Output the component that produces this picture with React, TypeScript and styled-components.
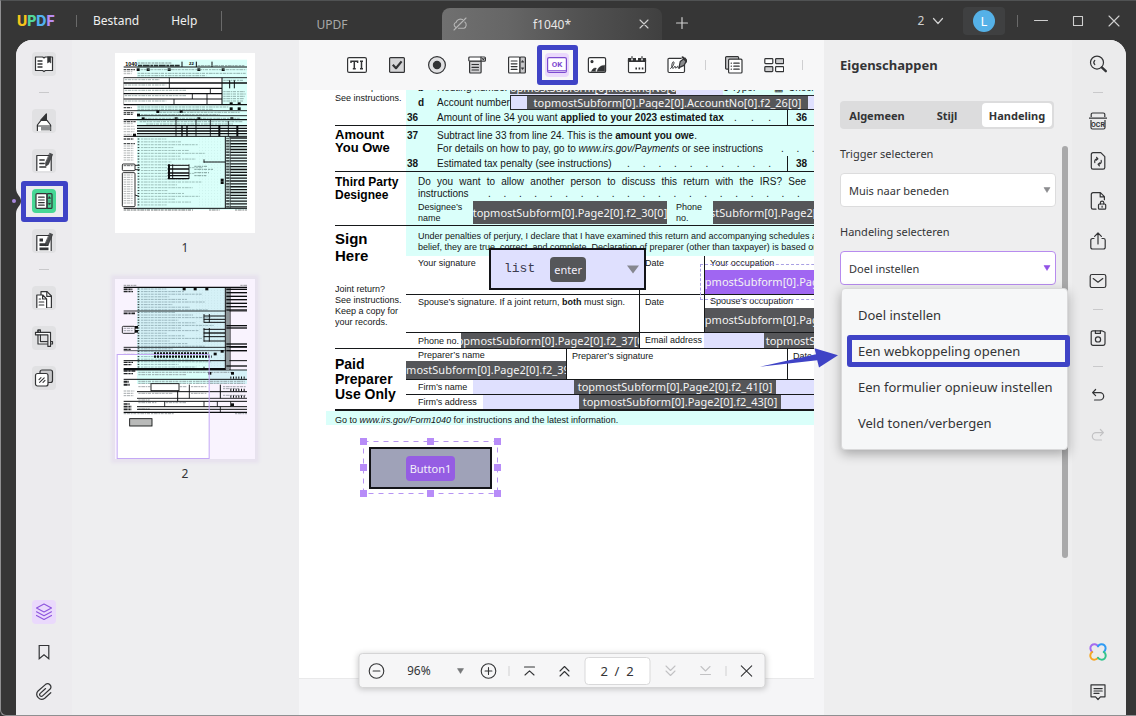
import React from 'react';
import styled, { createGlobalStyle, css } from 'styled-components';

const ui = `"Noto Sans", "Open Sans", sans-serif`;
const print = `"Liberation Sans", Arial, sans-serif`;
const ink = '#333436';
const mint = '#dafffa';
const lavender = '#dfe0fe';
const chipGray = '#555659';
const accent = '#3f43c6';
const purple = '#955de3';

const Global = createGlobalStyle`
  *, *::before, *::after { box-sizing: border-box; }
  html, body { margin: 0; padding: 0; }
  body { font-family: ${ui}; font-size: 12px; color: ${ink}; background: #363636; }
  button, input, select { font: inherit; color: inherit; margin: 0; }
  button { border: 0; padding: 0; background: none; cursor: pointer; }
  svg { display: block; flex: none; }
`;

/* ---------- window ---------- */

const Window = styled.div`
  display: flex;
  flex-direction: column;
  height: 100vh;
  min-height: 600px;
  overflow: hidden;
  background: #363636;
  border: 1px solid #8f8f91;
  border-top-color: #505253;
  border-right: 0;
  border-bottom-left-radius: 6px;
`;

const TitleBar = styled.header`
  display: flex;
  flex: none;
  height: 39px;
  align-items: flex-start;
  color: #e9e9e9;
`;

const Menu = styled.nav`
  display: flex;
  flex: none;
  align-items: center;
  width: 221px;
  height: 39px;
`;

const Logo = styled.div`
  flex: none;
  width: 75px;
  padding-left: 16px;
  font: 800 14px/20px Inter, sans-serif;
`;

const LogoLetter = styled.span<{ $c: string }>`
  color: ${(p) => p.$c};
`;

const BarDivider = styled.span<{ $h?: number }>`
  flex: none;
  width: 1px;
  height: ${(p) => p.$h ?? 12}px;
  background: #6a6a6a;
`;

const MenuButton = styled.button`
  flex: none;
  height: 28px;
  padding: 0 16px;
  font-size: 12px;
  color: #f0f0f0;
`;

const Tab = styled.div<{ $active?: boolean }>`
  position: relative;
  display: flex;
  align-items: center;
  justify-content: space-between;
  width: 220px;
  height: 32px;
  margin-top: 7px;
  padding: 0 10px;
  color: #a9a9a9;
  ${(p) =>
    p.$active
      ? css`
          color: #e8e8e8;
          border-radius: 8px 8px 0 0;
          background: linear-gradient(90deg, #707070 0%, #666 30%, #525252 62%, #404040 100%);
        `
      : css`
          justify-content: center;
        `}
`;

const TabLabel = styled.button`
  flex: 1;
  height: 32px;
`;

const Spacer = styled.div`
  flex: 1;
`;

const WindowTools = styled.div`
  display: flex;
  align-items: center;
  height: 39px;
`;

const BarButton = styled.button<{ $w: number }>`
  display: flex;
  align-items: center;
  justify-content: center;
  gap: 6px;
  width: ${(p) => p.$w}px;
  height: 28px;
  color: #cfcfcf;
`;

const NewTab = styled(BarButton)`
  margin-top: 8px;
`;

const AvatarButton = styled.button`
  display: flex;
  align-items: center;
  justify-content: center;
  width: 42px;
  height: 28px;
  margin-right: 12px;
  border-radius: 4px;
  background: #3f4041;
`;

const Avatar = styled.span`
  width: 22px;
  height: 22px;
  border-radius: 50%;
  background: #55b1e7;
  color: #fff;
  font-size: 13px;
  line-height: 22px;
`;

const Body = styled.div`
  display: flex;
  flex: 1;
  min-height: 0;
  margin: 0 10px 0 15px;
  border-radius: 16px 16px 0 0;
  background: #eeeef0;
`;

/* ---------- rails ---------- */

const Rail = styled.aside<{ $w: number; $right?: boolean }>`
  position: relative;
  display: flex;
  flex: none;
  flex-direction: column;
  align-items: center;
  gap: 16px;
  width: ${(p) => p.$w}px;
  padding: 12px ${(p) => (p.$right ? 2 : 0)}px 11px 0;
  border-radius: ${(p) => (p.$right ? '0 16px 0 0' : '16px 0 0 0')};
  background: ${(p) => (p.$right ? '#ebebec' : '#ecebee')};
`;

const tileTone = {
  none: 'transparent',
  gray: '#e1e1e3',
  green: '#47d795',
  lilac: '#ead9fc',
};

const Tile = styled.button<{ $tone?: keyof typeof tileTone; $dim?: boolean }>`
  position: relative;
  display: flex;
  flex: none;
  align-items: center;
  justify-content: center;
  width: 24px;
  height: 24px;
  border-radius: 4px;
  color: ${(p) => (p.$dim ? '#c2c2c4' : ink)};
  background: ${(p) => tileTone[p.$tone ?? 'none']};
`;

const RailRule = styled.hr`
  flex: none;
  width: 10px;
  height: 1px;
  margin: 0;
  border: 0;
  background: #c9c9cb;
`;

const Highlight = styled.span<{ $inset: string }>`
  position: absolute;
  inset: ${(p) => p.$inset};
  border: 5px solid ${accent};
  border-radius: 3px;
  pointer-events: none;
`;

const Notch = styled.svg`
  position: absolute;
  left: -5px;
  top: 145px;
`;

/* ---------- thumbnails ---------- */

const Thumbs = styled.section`
  flex: none;
  width: 227px;
  padding: 13px 0 0 43px;
  overflow: hidden;
`;

const Thumb = styled.figure<{ $selected?: boolean }>`
  width: 140px;
  margin: 0 0 23px;
  text-align: center;
  line-height: 16px;

  & > svg {
    margin-bottom: 7px;
    background: ${(p) => (p.$selected ? '#f9f3fe' : '#fff')};
    box-shadow: ${(p) => (p.$selected ? '0 0 3px 4px #e7e2ee' : 'none')};
  }
`;

/* ---------- centre column ---------- */

const Center = styled.main`
  position: relative;
  display: flex;
  flex: 1;
  flex-direction: column;
  min-width: 0;
  background: #f5f5f7;
`;

const Toolbar = styled.div`
  display: flex;
  flex: none;
  align-items: center;
  gap: 16px;
  height: 50px;
  padding-left: 46px;
  background: #f7f7f8;
`;

const ToolRule = styled.span`
  flex: none;
  width: 1px;
  height: 10px;
  background: #cfcfd1;
`;

const Viewport = styled.div`
  position: relative;
  flex: 1;
  min-height: 0;
  margin-right: 10px;
  overflow: hidden;
`;

const Page = styled.article`
  position: relative;
  width: 765px;
  height: 589px;
  padding: 0 36px;
  background: #fff;
  color: #131516;
  font: 10px/12px ${print};
  border-bottom: 1px solid #e9e9ea;
`;

const Section = styled.section<{ $h: number; $line?: number }>`
  display: grid;
  grid-template-columns: 71px 1fr;
  height: ${(p) => p.$h}px;
  border-bottom: ${(p) => p.$line ?? 1}px solid #16181a;
`;

const Side = styled.div<{ $end?: boolean }>`
  display: flex;
  flex-direction: column;
  justify-content: ${(p) => (p.$end ? 'flex-end' : 'flex-start')};
  min-height: 0;
  overflow: hidden;
  padding-bottom: ${(p) => (p.$end ? 21 : 0)}px;
  white-space: nowrap;
`;

const Heading = styled.h3<{ $s: number; $lh: number; $top: number }>`
  margin: ${(p) => p.$top}px 0 0;
  font-size: ${(p) => p.$s}px;
  line-height: ${(p) => p.$lh}px;
  font-weight: bold;
  color: #000;
`;

const Note = styled.p<{ $top?: number }>`
  margin: ${(p) => p.$top ?? 0}px 0 0;
  font-size: 9px;
  line-height: 11px;
`;

const Rows = styled.div<{ $mint?: boolean; $end?: boolean; $top?: number; $bottom?: number }>`
  display: flex;
  flex-direction: column;
  justify-content: ${(p) => (p.$end ? 'flex-end' : 'flex-start')};
  min-height: 0;
  overflow: hidden;
  padding-top: ${(p) => p.$top ?? 0}px;
  padding-bottom: ${(p) => p.$bottom ?? 0}px;
  background: ${(p) => (p.$mint ? mint : 'transparent')};
`;

const Row = styled.div<{ $h: number; $line?: boolean; $pad?: number; $small?: boolean }>`
  display: flex;
  flex: none;
  align-items: center;
  height: ${(p) => p.$h}px;
  padding-left: ${(p) => p.$pad ?? 0}px;
  border-bottom: ${(p) => (p.$line ? '1px solid #16181a' : '0')};
  font-size: ${(p) => (p.$small ? 9 : 10)}px;
  white-space: nowrap;
`;

const No = styled.b<{ $w?: number; $pad?: number }>`
  flex: none;
  width: ${(p) => p.$w ?? 31}px;
  padding-left: ${(p) => p.$pad ?? 1}px;
`;

const Amount = styled.b`
  align-self: stretch;
  display: flex;
  flex: none;
  align-items: center;
  width: 90px;
  padding-left: 8px;
  border-left: 1px solid #16181a;
`;

const Lead = styled.span<{ $w: number }>`
  flex: none;
  width: ${(p) => p.$w}px;
`;

const DotRow = styled.span<{ $w: number }>`
  display: flex;
  flex: none;
  justify-content: space-between;
  width: ${(p) => p.$w}px;
  padding-right: 16px;
`;

const Justified = styled.span`
  width: 388px;
  text-align-last: justify;
`;

const Cell = styled.div<{ $w?: number; $ruled?: boolean }>`
  display: flex;
  flex-direction: column;
  flex: ${(p) => (p.$w ? 'none' : '1')};
  align-self: stretch;
  width: ${(p) => (p.$w ? p.$w + 'px' : 'auto')};
  border-left: ${(p) => (p.$ruled ? '1px solid #16181a' : '0')};
`;

const CellText = styled.span<{ $h?: number; $pad?: number }>`
  flex: none;
  padding-left: ${(p) => p.$pad ?? 5}px;
  line-height: ${(p) => p.$h ?? 14}px;
`;

const Chip = styled.span<{ $w?: number; $h: number; $c?: string }>`
  display: flex;
  flex: none;
  align-items: center;
  justify-content: center;
  width: ${(p) => (p.$w ? p.$w + 'px' : 'auto')};
  height: ${(p) => p.$h}px;
  overflow: hidden;
  background: ${(p) => p.$c ?? chipGray};
  color: #f4f4f4;
  font: 11px/14px ${ui};
  white-space: nowrap;
`;

const Field = styled.span<{ $pad?: number; $w?: number; $box?: boolean }>`
  display: flex;
  align-self: stretch;
  align-items: center;
  flex: ${(p) => (p.$w ? 'none' : '1')};
  width: ${(p) => (p.$w ? p.$w + 'px' : 'auto')};
  padding-left: ${(p) => p.$pad ?? 0}px;
  overflow: hidden;
  background: ${lavender};
  border: ${(p) => (p.$box ? '1px solid #26282c' : '0')};
`;

const FootNote = styled.footer`
  height: 14px;
  margin: 0 -36px 0 -9px;
  padding: 3px 0 0 9px;
  background: ${mint};
  font-size: 9px;
  line-height: 12px;
`;

/* Widgets dropped on the page at free positions */
const ListField = styled.div`
  position: absolute;
  left: 190px;
  top: 158px;
  display: flex;
  align-items: center;
  width: 157px;
  height: 42px;
  padding: 0 4px 0 13px;
  border: 2px solid #131418;
  background: ${lavender};
  color: #3c3c50;
  font: 13px/20px "Liberation Mono", monospace;
`;

const NameTag = styled.span<{ $c: string; $left: number }>`
  margin-left: ${(p) => p.$left}px;
  padding: 0 4px;
  border-radius: 4px;
  background: ${(p) => p.$c};
  color: #f3effa;
  font: 11px/25px ${ui};
`;

const OccupationOutline = styled.div`
  position: absolute;
  left: 401px;
  top: 174px;
  width: 180px;
  height: 36px;
  border: 1px dashed #a9a0e4;
`;

const Selection = styled.div`
  position: absolute;
  left: 65px;
  top: 352px;
  width: 134px;
  height: 53px;
  padding: 5px;
`;

const Marquee = styled.svg`
  position: absolute;
  left: -5px;
  top: -5px;
`;

const PdfButton = styled.button`
  display: flex;
  align-items: center;
  justify-content: center;
  width: 123px;
  height: 42px;
  border: 2px solid #131418;
  background: #9fa2b8;
`;

const Pager = styled.div`
  position: absolute;
  left: 50%;
  bottom: 27px;
  transform: translateX(-50%);
  display: flex;
  align-items: center;
  gap: 8px;
  height: 35px;
  padding: 0 6px 0 5px;
  border: 1px solid #d5d5d6;
  border-radius: 4px;
  background: #f6f6f7;
  box-shadow: 0 1px 6px rgba(0, 0, 0, 0.22);
`;

const PagerGroup = styled.div`
  display: flex;
  gap: 11px;
`;

const PagerRule = styled(ToolRule)``;

const ZoomBox = styled.div`
  position: relative;
  width: 72px;
`;

const ZoomSelect = styled.select`
  appearance: none;
  width: 72px;
  height: 24px;
  padding: 0 0 0 11px;
  border: 0;
  background: none;
`;

const PageInput = styled.input`
  width: 66px;
  height: 28px;
  border: 1px solid #d9d9da;
  border-radius: 4px;
  background: #fff;
  text-align: center;
  font-size: 13px;
  white-space: pre;
`;

/* ---------- properties ---------- */

const Panel = styled.section`
  flex: none;
  width: 248px;
  padding: 0 4px 0 16px;
  background: #eeeeef;
`;

const PanelTitle = styled.h2`
  margin: 16px 0 27px;
  font-size: 13px;
  line-height: 18px;
  font-weight: bold;
`;

const Segments = styled.div`
  display: flex;
  width: 214px;
  height: 28px;
  padding: 2px;
  border-radius: 4px;
  background: #dcdcdd;
`;

const Segment = styled.button<{ $w: number; $on?: boolean }>`
  width: ${(p) => p.$w}px;
  border-radius: 4px;
  font-size: 11px;
  font-weight: bold;
  background: ${(p) => (p.$on ? '#fff' : 'transparent')};
`;

const PanelScroll = styled.div`
  display: flex;
  gap: 6px;
  margin-top: 17px;
`;

const Fields = styled.div`
  flex: 1;
`;

const ScrollThumb = styled.div`
  width: 6px;
  height: 412px;
  border-radius: 3px;
  background: #a9a9aa;
`;

const FieldLabel = styled.label`
  display: block;
  height: 27px;
  font-size: 11px;
  line-height: 16px;
`;

const SelectBox = styled.div`
  position: relative;
  height: 34px;
  margin-bottom: 17px;
`;

const Select = styled.select<{ $open?: boolean }>`
  appearance: none;
  width: 100%;
  height: 34px;
  padding: 0 24px 0 8px;
  border: 1px solid ${(p) => (p.$open ? '#b78bee' : '#dcdcdd')};
  border-radius: 4px;
  background: #fff;
  font-size: 11px;
`;

const Caret = styled.svg<{ $right: number; $top: number }>`
  position: absolute;
  right: ${(p) => p.$right}px;
  top: ${(p) => p.$top}px;
  pointer-events: none;
`;

const Options = styled.ul`
  position: absolute;
  z-index: 2;
  left: 1px;
  top: 37px;
  width: 227px;
  height: 162px;
  margin: 0;
  padding: 8px 0;
  list-style: none;
  border: 1px solid #d9d9da;
  border-radius: 4px;
  background: #f6f7f8;
  box-shadow: 0 4px 12px rgba(0, 0, 0, 0.3);
`;

const Option = styled.li`
  position: relative;
`;

const OptionButton = styled.button`
  width: 100%;
  height: 36px;
  padding-left: 16px;
  text-align: left;
  font-size: 13px;
  white-space: nowrap;
`;

const Pointer = styled.svg`
  position: absolute;
  z-index: 3;
  left: -81px;
  top: 96px;
  pointer-events: none;
`;

/* ---------- icons ---------- */

const Icon = ({ children, s = 20, w = 1.2 }: { children: React.ReactNode; s?: number; w?: number }) => (
  <svg width={s} height={s} viewBox={`0 0 ${s} ${s}`} fill="none" stroke="currentColor" strokeWidth={w} strokeLinejoin="round" strokeLinecap="round" aria-hidden="true">
    {children}
  </svg>
);

const BookIcon = () => (
  <Icon>
    <path d="M1.5 3h7.2l1.3 1 1.3-1h7.2v13.5h-7.2L10 17.6l-1.3-1.1H1.5z" fill="#fff" />
    <path d="M4 7h4M4 10h4M4 13h4" strokeWidth="1.4" />
    <path d="M13.6 3v6l1.6-1.2L16.8 9V3z" fill="currentColor" strokeWidth=".6" />
  </Icon>
);
const MarkerIcon = () => (
  <Icon>
    <path d="M7 9L12.4 3v6z" fill="currentColor" />
    <path d="M7 9.400h6l3.600 4.600v6H3.400v-6z" fill="#fff" stroke="none" />
    <path d="M7 9.400h6l3.600 4.600v6M3.400 20v-6L7 9.400" />
    <path d="M3.400 15h13.200" />
    <path d="M7 17.500h9.600" stroke="#8b8d8f" strokeWidth="4" strokeLinecap="butt" />
  </Icon>
);
const NotePenIcon = ({ blocks }: { blocks?: boolean }) => (
  <Icon>
    <path d="M3 20V4.500h14V20z" fill="#fff" stroke="none" />
    <path d="M2.800 19.600V4.500h14.400v15.100" />
    {blocks ? (
      <path d="M5.500 9h3.500M5.500 13.600h9M5.500 17.800h9" strokeWidth="2.8" strokeLinecap="butt" />
    ) : (
      <path d="M5.800 9h4.400M5.800 12.500h4.400M5.800 16h6" strokeWidth="1.4" />
    )}
    <path d="M16 2.400l2.600 1-4.200 10-2.600 1.600-.2-3z" fill="#4a4c4e" strokeWidth=".7" />
  </Icon>
);
const FormIcon = () => (
  <Icon>
    <rect x="2" y="2.6" width="11" height="14.8" rx="1" fill="#fff" />
    <rect x="13" y="2.6" width="5" height="14.8" rx="1" fill="none" />
    <path d="M4.6 6.2h5.6M4.6 9h5.6M4.6 11.6h5.6M4.6 14.2h5.6" />
    <path d="M15.5 5.6l1.2 1.8h-2.4zM15.5 13.8l1.2-1.8h-2.4zM14.6 10h1.8" fill="currentColor" strokeWidth=".5" />
  </Icon>
);
const PagesIcon = () => (
  <Icon>
    <path d="M7 15V3.600h6L17.400 8v12H13" fill="#fff" />
    <path d="M12.800 3.600v4.800h4.600" />
    <path d="M2.800 20V7h6l3.800 3.800V20z" fill="#fff" stroke="none" />
    <path d="M2.800 19.600V7h6l3.800 3.800v8.800M8.600 7v4h4M5.200 11h1.400M5.200 14h4.600M5.200 17h4.600" />
  </Icon>
);
const CropIcon = () => (
  <Icon>
    <path d="M4 2h2.400v11.600H18.500V16H4z" fill="#fff" />
    <path d="M1.500 4.400h15v14h-2.600V6.800H1.500z" fill="#fff" />
    <path d="M4 4.400V2h2.400v2.400" />
  </Icon>
);
const WatermarkIcon = () => (
  <Icon>
    <rect x="6" y="2" width="12.500" height="12.500" rx="2" fill="#c8c8ca" />
    <rect x="1.500" y="5.500" width="12.500" height="12.500" rx="2" fill="#fff" />
    <path d="M5 11.600l2-2M5.600 14.400l4.600-4.600M9 14.400l2-2" strokeWidth="1.100" />
  </Icon>
);
const LayersIcon = () => (
  <Icon w={1.1}>
    <g stroke="#8d55dd">
      <path d="M10 2l7.500 4L10 10 2.500 6z" />
      <path d="M2.500 9.800L10 13.800l7.500-4M2.500 13.400L10 17.400l7.500-4" />
    </g>
  </Icon>
);
const BookmarkIcon = () => (
  <Icon>
    <path d="M5.200 3.500h9.600v13.200L10 12.800l-4.800 3.900z" strokeLinejoin="miter" />
  </Icon>
);
const ClipIcon = () => (
  <Icon>
    <path d="M11.200 6.400l-4.800 5.400a1.700 1.700 0 002.600 2.200l6.800-7.600a3.300 3.300 0 00-5-4.200L4 9.600a5 5 0 007.400 6.600l5.400-6.200" transform="rotate(6 10 10)" />
  </Icon>
);
const SearchIcon = () => (
  <Icon>
    <circle cx="9" cy="8.600" r="6.500" />
    <path d="M6.800 6.400a3 3 0 000 4.200" />
    <path d="M13.800 13.400l4 3.800" strokeWidth="2.400" />
  </Icon>
);
const OcrIcon = () => (
  <svg width="20" height="20" viewBox="0 0 20 20" fill="none" stroke="currentColor" strokeWidth="1.200" aria-hidden="true">
    <path d="M3.200 6V3.500a1.500 1.500 0 011.500-1.500h10.600a1.500 1.500 0 011.500 1.500V6M1 7.200h18M3 9v7.500A1.500 1.500 0 004.500 18h11a1.500 1.500 0 001.500-1.500V9" />
    <text x="10" y="15.800" textAnchor="middle" fontFamily="Roboto, sans-serif" fontWeight="700" fontSize="7" fill="currentColor" stroke="none">OCR</text>
  </svg>
);
const ConvertIcon = () => (
  <Icon>
    <path d="M5 1.700h7.800l4 4V16.500a1.700 1.700 0 01-1.700 1.700H5a1.700 1.700 0 01-1.700-1.700v-13A1.700 1.700 0 015 1.700z" />
    <path d="M6.800 11.600c-.6-2 .8-3.800 2.800-3.800M8.600 6.300l1.300 1.500-1.500 1.300M13.200 9.400c.6 2-.8 3.900-2.800 3.900M11.400 14.800l-1.300-1.500 1.500-1.300" />
  </Icon>
);
const LockIcon = () => (
  <Icon>
    <path d="M8 18.200H5a1.700 1.700 0 01-1.700-1.700v-13A1.700 1.700 0 015 1.700h7.400l4 4v3M12.200 1.900v4h4" />
    <rect x="10.500" y="13" width="7.200" height="5.200" rx="1" />
    <path d="M12.400 13v-1.200a1.700 1.700 0 013.400 0V13M14.100 15.200v1" />
  </Icon>
);
const ShareIcon = () => (
  <Icon>
    <path d="M6 7.500H4.500A1.700 1.700 0 002.800 9.200v7A1.700 1.700 0 004.500 18h11a1.700 1.700 0 001.700-1.800v-7a1.700 1.700 0 00-1.700-1.700H14M10 13V2.200M6.600 5.400L10 2l3.400 3.400" />
  </Icon>
);
const MailIcon = () => (
  <Icon>
    <rect x="2.200" y="3.500" width="15.600" height="13" rx="1.800" />
    <path d="M5.200 7.600l4.800 3.600 4.800-3.600" />
  </Icon>
);
const SaveIcon = () => (
  <Icon>
    <path d="M5 2.800h8.800L17 4.200v11.400a1.700 1.700 0 01-1.700 1.700H4.900a1.700 1.700 0 01-1.700-1.700V4.500A1.700 1.700 0 015 2.800z" />
    <path d="M7.400 2.800v2.600h5V2.800" />
    <circle cx="10" cy="11.400" r="2.600" />
  </Icon>
);
const UndoIcon = ({ flip }: { flip?: boolean }) => (
  <Icon>
    <g transform={flip ? 'matrix(-1 0 0 1 20 0)' : undefined}>
      <path d="M7.600 4.500L4.600 7.600l3 3M4.800 7.600H12a3.600 3.600 0 010 7.400H6.500" />
    </g>
  </Icon>
);
const FlowerIcon = () => (
  <svg width="20" height="20" viewBox="0 0 20 20" fill="none" strokeWidth="2" strokeLinecap="round" aria-hidden="true">
    <path d="M10 4.200C8.600 2 5.600 1.400 3.600 3.200S2.200 8.400 4.200 10" stroke="#a46bf0" />
    <path d="M10 4.200C11.400 2 14.400 1.400 16.400 3.200S17.800 8.400 15.800 10" stroke="#2f9bf4" />
    <path d="M4.200 10C2 11.400 1.600 14.800 3.400 16.600S8.600 17.800 10 15.800" stroke="#f5a623" />
    <path d="M15.800 10C18 11.400 18.400 14.800 16.600 16.600S11.400 17.800 10 15.800" stroke="#32c48d" />
  </svg>
);
const CommentIcon = () => (
  <Icon>
    <path d="M3 2.800h14v12h-4.600L10 17.500l-2.400-2.700H3z" />
    <path d="M6 6.600h8.200M6 9h8.200M6 11.400h5" />
  </Icon>
);

const TextFieldIcon = () => (
  <svg width="20" height="20" viewBox="0 0 20 20" aria-hidden="true">
    <rect x=".6" y="2.600" width="18.800" height="14.800" rx="1.500" fill="#fff" stroke="currentColor" strokeWidth="1.200" />
    <path d="M4 8V6.200h6.600V8M7.300 6v8M5.800 13.800h3M13 6.200h3M13 13.800h3M14.500 6v8" fill="none" stroke="currentColor" strokeWidth="1.500" />
  </svg>
);
const CheckFieldIcon = () => (
  <Icon>
    <rect x="2.600" y="2.600" width="14.800" height="14.800" rx="1" fill="#d6d6d8" />
    <path d="M5.800 9.800l3.200 3.400 5.600-6.800" strokeWidth="2.200" strokeLinecap="butt" />
  </Icon>
);
const RadioFieldIcon = () => (
  <Icon>
    <circle cx="10" cy="10" r="8.400" fill="#e0e0e2" />
    <circle cx="10" cy="10" r="3.600" fill="currentColor" />
  </Icon>
);
const ComboIcon = () => (
  <Icon>
    <rect x="2.600" y="6" width="11.500" height="12" rx="1" fill="#d0d0d2" />
    <rect x="1.800" y="2" width="16.600" height="4.200" rx="1" fill="#fff" />
    <path d="M14 2v4M15.400 3.600l.9 1 .9-1M5 9.500h6.500M5 12.300h6.500M5 15h6.500" />
  </Icon>
);
const ListIcon = () => (
  <Icon>
    <rect x="1.600" y="2" width="11.400" height="16" rx="1" fill="#fff" />
    <rect x="13" y="2" width="5.400" height="16" rx="1" fill="#c9c9cb" />
    <path d="M4.200 6h5.800M4.200 8.800h5.800M4.200 11.600h5.800M4.200 14.400h5.800" />
    <path d="M15.700 5.600l1.200 1.600h-2.400zM15.700 14.400l1.200-1.600h-2.400z" fill="currentColor" strokeWidth=".5" />
  </Icon>
);
const OkIcon = () => (
  <svg width="20" height="20" viewBox="0 0 20 20" aria-hidden="true">
    <rect x=".6" y="2.600" width="18.800" height="14.800" rx="1.500" fill="#fff" stroke="#7d4bd0" strokeWidth="1.200" />
    <path d="M.8 15.600h18.400" stroke="#9a70de" strokeWidth="1.400" />
    <text x="10" y="12.200" textAnchor="middle" fontFamily="Roboto, sans-serif" fontWeight="700" fontSize="8" fill="#7d4bd0">OK</text>
  </svg>
);
const ImageIcon = () => (
  <Icon>
    <rect x="1.400" y="2.600" width="17.200" height="14.800" rx="1.500" fill="#fff" />
    <circle cx="5" cy="6.600" r="1" fill="currentColor" />
    <path d="M4.400 16.600c1-3 3-4 5-3.400-.6 1-1 2.200-1 3.400zM10 16.600c.8-4 3.600-6.200 7.800-6.400v6.400z" fill="currentColor" strokeWidth=".4" />
  </Icon>
);
const DateIcon = () => (
  <Icon>
    <path d="M1.500 5h17v11.400a1.200 1.200 0 01-1.200 1.200H2.700a1.200 1.200 0 01-1.200-1.200z" fill="#fff" />
    <path d="M1.500 3.600h17v2.800h-17z" fill="currentColor" />
    <path d="M5 1.600v2.800M10 1.600v2.800M15 1.600v2.800" stroke="#fff" strokeWidth="2" />
    <path d="M5 1.600v2.400M15 1.600v2.400" />
    <path d="M8.400 13.600h1.600M11.600 13.600h1.600M14.800 13.600h1.600" strokeWidth="2" strokeLinecap="butt" />
  </Icon>
);
const SignIcon = () => (
  <Icon>
    <path d="M16.500 9.500v6.800a1.200 1.200 0 01-1.200 1.200H1.200a1.200 1.200 0 01-1.200-1.200V4.500a1.200 1.200 0 011.200-1.200h12" transform="translate(1 0)" fill="#fff" />
    <path d="M3.600 13.400c2.600-1.600 4.200-6 3-6.600-1.600-.4-2.600 6-.8 6.600 1 .2 1.400-2.200 2.200-2.200s0 2 .8 2 1-1.800 1.800-1.800 0 1.800.8 1.800h1.200" strokeWidth="1" />
    <path d="M12 12.600l1.200-6 4.800-3.600 1.800 2.400-2.800 5z" fill="#8a8b8d" />
    <path d="M15.600 2.200l3.800 4.200" strokeWidth="2" />
  </Icon>
);
const DuplicateIcon = () => (
  <Icon>
    <rect x="1.600" y="1.600" width="13" height="12.600" rx="1" fill="#c9c9cb" />
    <rect x="4.600" y="4.200" width="13.400" height="13.800" rx="1" fill="#fff" />
    <path d="M7.200 8.200h.2M9.800 8.200h5.400M7.200 11.200h.2M9.800 11.200h5.400M7.200 14.200h.2M9.800 14.200h5.400" />
  </Icon>
);
const GridIcon = () => (
  <Icon>
    <rect x=".8" y="3.600" width="8" height="5" rx=".8" fill="#fff" />
    <rect x="11.600" y="3.600" width="8" height="5" rx=".8" fill="#cfcfd1" />
    <rect x=".8" y="11.600" width="8" height="5" rx=".8" fill="#cfcfd1" />
    <rect x="11.600" y="11.600" width="8" height="5" rx=".8" fill="#fff" />
  </Icon>
);
const CircleIcon = ({ plus }: { plus?: boolean }) => (
  <Icon w={1.1}>
    <circle cx="10" cy="10" r="7.300" />
    <path d={plus ? 'M6.600 10h6.800M10 6.600v6.800' : 'M6.600 10h6.800'} />
  </Icon>
);
const JumpIcon = ({ d }: { d: string }) => (
  <Icon w={1.1}>
    <path d={d} />
  </Icon>
);
const Triangle = ({ c, right, top }: { c: string; right: number; top: number }) => (
  <Caret $right={right} $top={top} width="8" height="6" viewBox="0 0 8 6">
    <path d="M1 .6h6L4 5.400z" fill={c} stroke={c} strokeWidth=".6" strokeLinejoin="round" />
  </Caret>
);

/* ---------- thumbnail drawings ---------- */

const range = (from: number, to: number, step: number) => {
  const out: number[] = [];
  for (let v = from; v <= to; v += step) out.push(v);
  return out;
};

type Seg = [number, number, number, number?];
const H = ({ rows, w = 2.6, c = '#0c0e10', dash }: { rows: Seg[]; w?: number; c?: string; dash?: string }) => (
  <g stroke={c} strokeDasharray={dash}>
    {rows.map(([y, a, b, t], i) => (
      <path key={i} d={`M${a} ${y}H${b}`} strokeWidth={t ?? w} />
    ))}
  </g>
);
const V = ({ cols, w = 2.6, c = '#0c0e10' }: { cols: Seg[]; w?: number; c?: string }) => (
  <g stroke={c}>
    {cols.map(([x, a, b, t], i) => (
      <path key={i} d={`M${x} ${a}V${b}`} strokeWidth={t ?? w} />
    ))}
  </g>
);
const Squares = ({ at }: { at: [number, number][] }) => (
  <g fill="#0b0c0d">
    {at.map(([x, y], i) => (
      <rect key={i} x={x} y={y} width="9" height="8" />
    ))}
  </g>
);
const words = '7 2 11 2 5 2 9 3';

const PageOneDrawing = () => (
  <svg width="140" height="180" viewBox="347 158 418 540" aria-hidden="true">
    <rect x="412" y="178" width="330" height="450" fill={mint} />
    <rect x="372" y="233" width="295" height="79" fill="#fff" />
    <rect x="412" y="377" width="330" height="31" fill="#eafffc" />
    <rect x="692" y="408" width="50" height="216" fill="#e3f7f5" />
    <text x="377" y="196" fontFamily="Liberation Sans, sans-serif" fontWeight="700" fontSize="16">1040</text>
    <H rows={[[188, 415, 515, 3]]} c="#7f9693" dash={words} />
    <H rows={[[196, 415, 540, 5]]} c="#26302f" dash="13 2 20 2 9 2" />
    <V cols={[[547, 184, 200, 3], [590, 184, 200, 3], [637, 184, 200, 3]]} />
    <text x="568" y="195" fontFamily="Liberation Sans, sans-serif" fontWeight="700" fontSize="13">22</text>
    <H rows={[[196, 594, 734]]} c="#7f9693" dash={words} />
    <Squares at={[[411, 204], [441, 204], [504, 204], [593, 204], [666, 204], [690, 306], [714, 306], [690, 321], [714, 321], [470, 330], [540, 330], [412, 340], [426, 351], [525, 351], [593, 351], [692, 351], [400, 400], [663, 535], [663, 543]]} />
    <H rows={[[208, 372, 406, 4], [322, 372, 396, 4], [337, 372, 402, 4], [342, 372, 400, 4], [364, 372, 408, 4], [416, 372, 402, 4], [430, 372, 406, 4], [496, 372, 402]]} c="#4c4f50" dash={words} />
    <H rows={[[214, 372, 398], [220, 372, 396], [370, 372, 400], [378, 372, 404], [386, 372, 406], [394, 372, 404], [402, 372, 396], ...range(437, 485, 7).map((y): Seg => [y, 372, 402]), ...range(524, 612, 7).map((y): Seg => [y, 372, 400])]} c="#8d9192" dash={words} w={2} />
    <H rows={[[208, 423, 740], [219, 414, 738], [226, 414, 620], [238, 375, 480], [254, 375, 500], [270, 375, 560], [286, 375, 560], [302, 375, 500], [240, 671, 730], [274, 671, 736], [281, 671, 738], [288, 671, 736], [295, 671, 732], [302, 671, 730], [320, 414, 686], [327, 414, 640], [336, 480, 720], [343, 424, 660], [354, 436, 720], [364, 420, 730], [371, 440, 700]]} c="#6f8b88" dash={words} w={2} />
    <H rows={[[200, 372, 742, 3], [232, 372, 742], [248, 372, 742, 4], [264, 372, 667, 4], [280, 372, 667, 4], [296, 372, 667, 3], [313, 372, 742, 4], [331, 372, 742], [346, 412, 742], [358, 372, 742, 4], ...range(376, 402, 8).map((y): Seg => [y, 412, 742, 4]), [408, 372, 742, 3], [624, 372, 742, 3], [485, 612, 676, 3]]} />
    <V cols={[[509, 232, 264], [667, 232, 312, 3], [632, 264, 280], [578, 280, 296], [622, 280, 312], [523, 296, 312], [690, 240, 264, 3], [704, 240, 264, 3], [529, 358, 408], [547, 376, 408, 4], [562, 376, 408, 4], [589, 358, 408], [632, 358, 408], [659, 376, 408, 6], [686, 362, 408], [713, 376, 408, 6], [613, 477, 487], [677, 408, 624, 3], [691, 408, 624, 3], [372, 232, 312, 1]]} />
    <H rows={range(416, 616, 8.6).map((y, i): Seg => [y, 424, 500 + ((i * 47) % 120)])} c="#7d9e9a" dash={words} w={2} />
    <H rows={range(416, 616, 8.6).map((y): Seg => [y, 414, 419])} c="#26302f" w={3} />
    <H rows={range(416, 616, 8.6).map((y): Seg => [y, 600, 672])} c="#9fc4bf" dash="1 8" w={2} />
    <H rows={range(413, 622, 8.6).map((y): Seg => [y, 692, 742, 4])} c="#131616" />
    <V cols={[[684, 412, 622, 9]]} c="#47504f" />
    <H rows={range(417, 620, 8.6).map((y): Seg => [y, 679, 690, 3])} c="#e5fffb" />
    <rect x="504" y="492" width="64" height="44" fill="#eafffc" />
    <H rows={[[495, 504, 568, 3], [506, 504, 568, 4], [518, 504, 568, 4], [526, 504, 568, 4], [535, 504, 568, 4]]} />
    <V cols={[[508, 492, 536, 6], [519, 492, 536], [568, 492, 536]]} />
    <H rows={[[498, 584, 624], [507, 584, 640], [517, 584, 628], [526, 584, 620]]} c="#52706c" dash={words} w={2} />
    <g fill="none" stroke="#0b0c0d" strokeWidth="2.600">
      <rect x="368" y="491" width="38" height="20" rx="3" />
      <rect x="368" y="517" width="38" height="102" rx="3" />
      <path d="M406 495h14M406 508h14M406 584l12 4" />
    </g>
    <H rows={[[629, 372, 580, 3], [629, 628, 660], [629, 706, 742]]} c="#6f7475" dash={words} />
  </svg>
);

const PageTwoDrawing = () => (
  <svg width="140" height="180" viewBox="347 117 418 540" aria-hidden="true">
    <rect x="352" y="343" width="276" height="313" fill="#fff" />
    <rect x="412" y="143" width="264" height="246" fill="#d5f1f7" />
    <rect x="412" y="343" width="216" height="89" fill={mint} />
    <rect x="628" y="389" width="114" height="43" fill="#d5f1f7" />
    <H rows={[[136, 372, 410], [136, 722, 742]]} c="#85888a" dash={words} />
    <H rows={[[148, 372, 398, 5], [155, 372, 400, 4], [220, 372, 406, 5], [328, 372, 394, 4], [367, 372, 400, 4], [374, 372, 396, 4], [393, 372, 408, 4], [401, 372, 400, 4], [425, 372, 388, 6], [434, 372, 390, 6], [492, 372, 390, 5], [500, 372, 396, 5], [508, 372, 396, 5]]} c="#232527" dash="12 2 7 2" />
    <H rows={range(147, 384, 7.8).map((y, i): Seg => [y, 424, 500 + ((i * 53) % 150)])} c="#7b98a0" dash={words} w={2} />
    <H rows={range(147, 384, 7.8).map((y): Seg => [y, 414, 419])} c="#26302f" w={3} />
    <H rows={range(151, 384, 7.8).map((y): Seg => [y, 590, 672])} c="#a6c6cb" dash="1 8" w={2} />
    <H rows={[[397, 416, 700], [404, 416, 560], [424, 416, 735], [430, 416, 735], [440, 416, 452], [440, 540, 560], [440, 574, 620], [440, 670, 738], [446, 670, 720], [460, 416, 520], [460, 574, 620], [466, 670, 738], [480, 416, 450], [488, 416, 470], [488, 498, 560], [507, 416, 450], [521, 372, 524], [521, 706, 742], [453, 372, 404], [460, 372, 402], [467, 372, 402], [343, 372, 404]]} c="#777f83" dash={words} w={2} />
    <H rows={[[142, 372, 742, 4], [213, 372, 742], [228, 612, 676, 3], [238, 612, 676, 3], [247, 612, 676, 3], [268, 612, 676, 3], [279, 612, 676, 4], [290, 612, 676, 3], [303, 612, 676, 3], [322, 372, 742], [332, 372, 742, 2], [362, 372, 742, 3], [387, 372, 676, 6], [390, 372, 742], [418, 372, 742, 3], [455, 412, 742, 3], [475, 412, 742], [484, 372, 742, 3], [500, 412, 742, 3], [508, 412, 742, 3], [517, 372, 742, 4]]} />
    <V cols={[[677, 142, 390, 3], [691, 142, 390, 3], [613, 222, 247], [629, 222, 247], [613, 264, 305], [629, 264, 305], [534, 452, 484, 3], [569, 434, 475], [662, 434, 475, 3], [495, 484, 500], [613, 484, 500], [653, 484, 500], [662, 500, 517], [693, 484, 500], [613, 380, 390]]} />
    <V cols={[[684, 144, 388, 10]]} c="#8d9699" />
    <H rows={[148, 158, 169, 179, 190, 200, 210, 257, 264, 312, 320, 332, 378].map((y): Seg => [y, 680, 742, 4])} />
    <Squares at={[[549, 143], [582, 143], [617, 143], [663, 330], [642, 338], [626, 396], [694, 396], [694, 490]]} />
    <H rows={[[341, 463, 626, 8], [350, 463, 636, 7]]} dash="6 3" />
    <H rows={[[413, 692, 740, 7], [450, 692, 740, 7], [470, 692, 740, 7]]} dash="3 5" />
    <rect x="454" y="431" width="84" height="21" fill="#fff" stroke="#0b0c0d" strokeWidth="2.600" />
    <rect x="390" y="536" width="67" height="22" fill="#b9bab9" stroke="#0b0c0d" strokeWidth="2.600" />
    <rect x="368" y="259" width="38" height="21" rx="3" fill="none" stroke="#0b0c0d" strokeWidth="2.600" />
    <H rows={[[265, 372, 402], [272, 372, 400]]} c="#777f83" dash={words} w={2} />
    <Squares at={[[406, 258], [406, 270]]} />
    <rect x="352.500" y="343.500" width="276" height="312" fill="none" stroke="#c4a8f5" strokeWidth="3" />
  </svg>
);

/* ---------- page parts ---------- */

const Dots = ({ n, w }: { n: number; w: number }) => (
  <DotRow $w={w} aria-hidden="true">
    {Array.from({ length: n }, (_, i) => (
      <span key={i}>.</span>
    ))}
  </DotRow>
);

const handleX = [4, 71, 138];
const handleY = [4, 30, 56];

const TaxForm = () => (
  <Page>
    <Section $h={36}>
      <Side $end>
        <Note>Direct deposit?</Note>
        <Note>See instructions.</Note>
      </Side>
      <Rows $mint $end>
        <Row $h={15}>
          <No $pad={12}>b</No>
          <Lead $w={73}>Routing number</Lead>
          <Field $w={213}>
            <Chip $w={166} $h={13}>topmostSubform[0].RoutingNo[0]</Chip>
          </Field>
          <Lead $w={51}><b>c</b> Type:</Lead>
          <Lead $w={14}>▦</Lead>
          <span>Checking</span>
        </Row>
        <Row $h={15}>
          <No $pad={12}>d</No>
          <Lead $w={73}>Account number</Lead>
          <Field $box $pad={16}>
            <Chip $w={281} $h={14}>topmostSubform[0].Page2[0].AccountNo[0].f2_26[0]</Chip>
          </Field>
        </Row>
        <Row $h={15}>
          <No>36</No>
          <Lead $w={297}>Amount of line 34 you want <b>applied to your 2023 estimated tax</b></Lead>
          <Dots n={3} w={53} />
          <Amount>36</Amount>
        </Row>
      </Rows>
    </Section>

    <Section $h={46}>
      <Side>
        <Heading $s={13} $lh={13} $top={2}>Amount<br />You Owe</Heading>
      </Side>
      <Rows $mint $top={4}>
        <Row $h={12}>
          <No>37</No>
          <span>Subtract line 33 from line 24. This is the <b>amount you owe</b>.</span>
        </Row>
        <Row $h={14} $pad={31}>
          <Lead $w={344}>For details on how to pay, go to <i>www.irs.gov/Payments</i> or see instructions</Lead>
          <Dots n={4} w={65} />
        </Row>
        <Row $h={15}>
          <No>38</No>
          <Lead $w={190}>Estimated tax penalty (see instructions)</Lead>
          <Dots n={10} w={160} />
          <Amount>38</Amount>
        </Row>
      </Rows>
    </Section>

    <Section $h={54}>
      <Side>
        <Heading $s={12} $lh={13} $top={4}>Third Party<br />Designee</Heading>
      </Side>
      <Rows $mint $top={4}>
        <Row $h={12} $pad={12}>
          <Justified>Do you want to allow another person to discuss this return with the IRS? See</Justified>
        </Row>
        <Row $h={12} $pad={12}>
          <Lead $w={70}>instructions</Lead>
          <Dots n={21} w={328} />
        </Row>
        <Row $h={25} $pad={12} $small>
          <Lead $w={55}><Note>Designee’s<br />name</Note></Lead>
          <Chip $w={194} $h={23}>topmostSubform[0].Page2[0].f2_30[0]</Chip>
          <CellText $pad={9}><Note>Phone<br />no.</Note></CellText>
          <Lead $w={11} />
          <Chip $w={120} $h={23}>topmostSubform[0].Page2[0].f2_31[0]</Chip>
        </Row>
      </Rows>
    </Section>

    <Section $h={123}>
      <Side>
        <Heading $s={15} $lh={17} $top={4}>Sign<br />Here</Heading>
        <Note $top={20}>Joint return?<br />See instructions.<br />Keep a copy for<br />your records.</Note>
      </Side>
      <Rows>
        <Rows $mint $top={4} $bottom={4}>
          <Row $h={11} $pad={12} $small>Under penalties of perjury, I declare that I have examined this return and accompanying schedules and</Row>
          <Row $h={11} $pad={12} $small>belief, they are true, correct, and complete. Declaration of preparer (other than taxpayer) is based on all</Row>
        </Rows>
        <Row $h={39} $line $small>
          <Cell $w={233}><CellText $pad={12}>Your signature</CellText></Cell>
          <Cell $w={65} $ruled><CellText>Date</CellText></Cell>
          <Cell $ruled>
            <CellText>Your occupation</CellText>
            <Chip $w={173} $h={24} $c="#a066f2">topmostSubform[0].Page2[0].f2_33[0]</Chip>
          </Cell>
        </Row>
        <Row $h={38} $line $small>
          <Cell $w={233}><CellText $pad={12}><span>Spouse’s signature. If a joint return, <b>both</b> must sign.</span></CellText></Cell>
          <Cell $w={65} $ruled><CellText>Date</CellText></Cell>
          <Cell $ruled>
            <CellText $h={13}>Spouse’s occupation</CellText>
            <Chip $w={173} $h={24}>topmostSubform[0].Page2[0].f2_35[0]</Chip>
          </Cell>
        </Row>
        <Row $h={15} $small>
          <Lead $w={55}><CellText $pad={12}>Phone no.</CellText></Lead>
          <Chip $w={178} $h={15}>topmostSubform[0].Page2[0].f2_37[0]</Chip>
          <Cell $w={65} $ruled><CellText $h={15}>Email address</CellText></Cell>
          <Field>
            <Lead $w={60} />
            <Chip $w={198} $h={15}>topmostSubform[0].Page2[0].f2_38[0]</Chip>
          </Field>
        </Row>
      </Rows>
    </Section>

    <Section $h={62} $line={2}>
      <Side>
        <Heading $s={14} $lh={15} $top={8}>Paid<br />Preparer<br />Use Only</Heading>
      </Side>
      <Rows>
        <Row $h={31} $line $small>
          <Cell $w={160}>
            <CellText $pad={12} $h={12}>Preparer’s name</CellText>
            <Chip $w={160} $h={18}>topmostSubform[0].Page2[0].f2_39[0]</Chip>
          </Cell>
          <Cell $w={221} $ruled><CellText>Preparer’s signature</CellText></Cell>
          <Cell $ruled><CellText>Date</CellText></Cell>
        </Row>
        <Row $h={15} $line $small>
          <Lead $w={67}><CellText $pad={12}>Firm’s name</CellText></Lead>
          <Field $pad={101}>
            <Chip $w={202} $h={15}>topmostSubform[0].Page2[0].f2_41[0]</Chip>
          </Field>
        </Row>
        <Row $h={14} $small>
          <Lead $w={77}><CellText $pad={12}>Firm’s address</CellText></Lead>
          <Field $pad={96}>
            <Chip $w={202} $h={14}>topmostSubform[0].Page2[0].f2_43[0]</Chip>
          </Field>
        </Row>
      </Rows>
    </Section>
    <FootNote>Go to <i>www.irs.gov/Form1040</i> for instructions and the latest information.</FootNote>

    <OccupationOutline />
    <ListField>
      list
      <NameTag $c={chipGray} $left={15}>enter</NameTag>
      <Spacer />
      <svg width="14" height="9" viewBox="0 0 14 9" aria-hidden="true">
        <path d="M1 .5h12L7 8.500z" fill="#86878f" />
      </svg>
    </ListField>
    <Selection>
      <Marquee width="142" height="60" viewBox="0 0 142 60" aria-hidden="true">
        <rect x="4.500" y="4.500" width="134" height="52" fill="none" stroke="#b794f4" strokeDasharray="5 5" />
        {handleX.map((x) =>
          handleY.map((y) => (x === 71 && y === 30 ? null : <rect key={`${x}-${y}`} x={x - 3} y={y - 3} width="7" height="7" fill="#b78cf8" />)),
        )}
      </Marquee>
      <PdfButton>
        <NameTag $c={purple} $left={0}>Button1</NameTag>
      </PdfButton>
    </Selection>
  </Page>
);

export default function App() {
  return (
    <>
      <Global />
      <Window>
        <TitleBar>
          <Menu>
            <Logo>
              <LogoLetter $c="#f4c51c">U</LogoLetter>
              <LogoLetter $c="#52d69a">P</LogoLetter>
              <LogoLetter $c="#52b2f0">D</LogoLetter>
              <LogoLetter $c="#b98df3">F</LogoLetter>
            </Logo>
            <BarDivider />
            <MenuButton>Bestand</MenuButton>
            <MenuButton>Help</MenuButton>
            <Spacer />
            <BarDivider $h={20} />
          </Menu>
          <Tab>
            <TabLabel>UPDF</TabLabel>
          </Tab>
          <Tab $active>
            <Icon s={16} w={1.1}>
              <path d="M2 14L14 2M4 11.500C1.500 10 1.500 7 4 6.500 5 3.500 8 2.500 10.500 3.500M12.800 6C15 7.500 14.500 11.500 12 12.200H6.500" stroke="#b5b5b5" />
            </Icon>
            <TabLabel>f1040*</TabLabel>
            <BarButton $w={16} aria-label="Tabblad sluiten">
              <Icon s={16} w={1.1}><path d="M4 4l8 8M12 4l-8 8" /></Icon>
            </BarButton>
          </Tab>
          <NewTab $w={40} aria-label="Nieuw tabblad">
            <Icon s={16} w={1.2}><path d="M2.500 8h11M8 2.500v11" /></Icon>
          </NewTab>
          <Spacer />
          <WindowTools>
            <BarButton $w={62}>
              2
              <Icon s={16} w={1.2}><path d="M3.500 5.500L8 10.500l4.500-5" /></Icon>
            </BarButton>
            <AvatarButton aria-label="Account"><Avatar>L</Avatar></AvatarButton>
            <BarDivider />
            <BarButton $w={46} aria-label="Minimaliseren">
              <Icon s={16} w={1.1}><path d="M1.500 7.500h13" /></Icon>
            </BarButton>
            <BarButton $w={28} aria-label="Maximaliseren">
              <Icon s={16} w={1.1}><rect x="3.500" y="3.500" width="9" height="9" /></Icon>
            </BarButton>
            <BarButton $w={44} aria-label="Sluiten">
              <Icon s={16} w={1.1}><path d="M3 3l10 10M13 3L3 13" /></Icon>
            </BarButton>
          </WindowTools>
        </TitleBar>

        <Body>
          <Rail $w={56}>
            <Notch width="10" height="32" viewBox="0 0 10 32" aria-hidden="true">
              <path d="M5 3c0 7 5 8 5 13s-5 6-5 13z" fill="#363636" />
              <circle cx="3" cy="16" r="2" fill="#a988dd" />
            </Notch>
            <Tile $tone="gray" aria-label="Lezer"><BookIcon /></Tile>
            <RailRule />
            <Tile $tone="gray" aria-label="Opmerking"><MarkerIcon /></Tile>
            <Tile $tone="gray" aria-label="Bewerken"><NotePenIcon /></Tile>
            <Tile $tone="green" aria-label="Formulier">
              <FormIcon />
              <Highlight $inset="-8px -12px -9px -11px" />
            </Tile>
            <Tile $tone="gray" aria-label="Redigeren"><NotePenIcon blocks /></Tile>
            <RailRule />
            <Tile $tone="gray" aria-label="Pagina's"><PagesIcon /></Tile>
            <Tile $tone="gray" aria-label="Bijsnijden"><CropIcon /></Tile>
            <Tile $tone="gray" aria-label="Watermerk"><WatermarkIcon /></Tile>
            <Spacer />
            <Tile $tone="lilac" aria-label="Miniaturen"><LayersIcon /></Tile>
            <Tile aria-label="Bladwijzers"><BookmarkIcon /></Tile>
            <Tile aria-label="Bijlagen"><ClipIcon /></Tile>
          </Rail>

          <Thumbs>
            <Thumb>
              <PageOneDrawing />
              <figcaption>1</figcaption>
            </Thumb>
            <Thumb $selected>
              <PageTwoDrawing />
              <figcaption>2</figcaption>
            </Thumb>
          </Thumbs>

          <Center>
            <Toolbar>
              <Tile aria-label="Tekstveld"><TextFieldIcon /></Tile>
              <Tile aria-label="Selectievakje"><CheckFieldIcon /></Tile>
              <Tile aria-label="Keuzerondje"><RadioFieldIcon /></Tile>
              <Tile aria-label="Vervolgkeuzelijst"><ComboIcon /></Tile>
              <Tile aria-label="Keuzelijst"><ListIcon /></Tile>
              <Tile $tone="lilac" aria-label="Knop">
                <OkIcon />
                <Highlight $inset="-8px -9px -8px -8px" />
              </Tile>
              <Tile aria-label="Afbeelding"><ImageIcon /></Tile>
              <Tile aria-label="Datum"><DateIcon /></Tile>
              <Tile aria-label="Handtekening"><SignIcon /></Tile>
              <ToolRule />
              <Tile aria-label="Dupliceren"><DuplicateIcon /></Tile>
              <Tile aria-label="Uitlijnen"><GridIcon /></Tile>
              <ToolRule />
            </Toolbar>
            <Viewport>
              <TaxForm />
            </Viewport>
            <Pager>
              <Tile aria-label="Uitzoomen"><CircleIcon /></Tile>
              <ZoomBox>
                <ZoomSelect aria-label="Zoom" defaultValue="96%">
                  <option>96%</option>
                </ZoomSelect>
                <Triangle c="#77787a" right={4} top={9} />
              </ZoomBox>
              <Tile aria-label="Inzoomen"><CircleIcon plus /></Tile>
              <PagerRule />
              <PagerGroup>
                <Tile aria-label="Eerste pagina"><JumpIcon d="M5 6h10M5.500 14L10 9.800l4.500 4.200" /></Tile>
                <Tile aria-label="Vorige pagina"><JumpIcon d="M5.500 10L10 5.500l4.500 4.500M5.500 15L10 10.500l4.500 4.500" /></Tile>
              </PagerGroup>
              <PageInput aria-label="Pagina" defaultValue="2  /  2" />
              <PagerGroup>
                <Tile $dim aria-label="Volgende pagina"><JumpIcon d="M5.500 5l4.500 4.500L14.500 5M5.500 10l4.500 4.500 4.500-4.500" /></Tile>
                <Tile $dim aria-label="Laatste pagina"><JumpIcon d="M5.500 5.500L10 10l4.500-4.500M5 13.500h10" /></Tile>
              </PagerGroup>
              <PagerRule />
              <Tile aria-label="Balk sluiten"><JumpIcon d="M4.800 4.800l10.400 10.400M15.200 4.800L4.800 15.200" /></Tile>
            </Pager>
          </Center>

          <Panel>
            <PanelTitle>Eigenschappen</PanelTitle>
            <Segments>
              <Segment $w={70}>Algemeen</Segment>
              <Segment $w={70}>Stijl</Segment>
              <Segment $w={70} $on>Handeling</Segment>
            </Segments>
            <PanelScroll>
              <Fields>
                <FieldLabel htmlFor="trigger">Trigger selecteren</FieldLabel>
                <SelectBox>
                  <Select id="trigger" defaultValue="Muis naar beneden">
                    <option>Muis naar beneden</option>
                  </Select>
                  <Triangle c="#8b8c8e" right={5} top={14} />
                </SelectBox>
                <FieldLabel htmlFor="action">Handeling selecteren</FieldLabel>
                <SelectBox>
                  <Select id="action" $open defaultValue="Doel instellen">
                    <option>Doel instellen</option>
                    <option>Een webkoppeling openen</option>
                    <option>Een formulier opnieuw instellen</option>
                    <option>Veld tonen/verbergen</option>
                  </Select>
                  <Triangle c="#9152e6" right={5} top={14} />
                  <Options>
                    <Option><OptionButton>Doel instellen</OptionButton></Option>
                    <Option>
                      <OptionButton>Een webkoppeling openen</OptionButton>
                      <Highlight $inset="2px -3px 2px 5px" />
                    </Option>
                    <Option><OptionButton>Een formulier opnieuw instellen</OptionButton></Option>
                    <Option><OptionButton>Veld tonen/verbergen</OptionButton></Option>
                  </Options>
                  <Pointer width="80" height="21" viewBox="0 0 80 21" aria-hidden="true">
                    <path d="M1 19.700l56-12.500-1.500-6L79 8.300 60 20.500l-1.800-7.300z" fill={accent} />
                  </Pointer>
                </SelectBox>
              </Fields>
              <ScrollThumb />
            </PanelScroll>
          </Panel>

          <Rail $w={54} $right>
            <Tile aria-label="Zoeken"><SearchIcon /></Tile>
            <RailRule />
            <Tile aria-label="OCR"><OcrIcon /></Tile>
            <Tile aria-label="Converteren"><ConvertIcon /></Tile>
            <Tile aria-label="Beveiligen"><LockIcon /></Tile>
            <Tile aria-label="Delen"><ShareIcon /></Tile>
            <Tile aria-label="E-mail"><MailIcon /></Tile>
            <RailRule />
            <Tile aria-label="Opslaan"><SaveIcon /></Tile>
            <RailRule />
            <Tile aria-label="Ongedaan maken"><UndoIcon /></Tile>
            <Tile $dim aria-label="Opnieuw"><UndoIcon flip /></Tile>
            <Spacer />
            <Tile aria-label="AI-assistent"><FlowerIcon /></Tile>
            <Tile aria-label="Opmerkingen"><CommentIcon /></Tile>
          </Rail>
        </Body>
      </Window>
    </>
  );
}
